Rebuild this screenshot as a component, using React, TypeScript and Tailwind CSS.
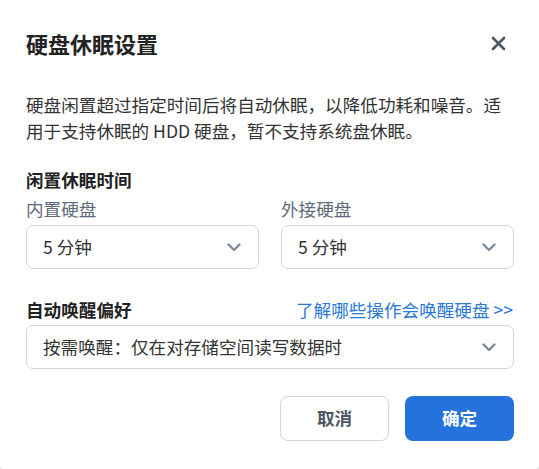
import React, { useState } from 'react';

const font = { fontFamily: '"Noto Sans CJK SC", "Noto Sans", sans-serif' };

function Chevron() {
  return (
    <svg width="14" height="9" viewBox="0 0 14 9" fill="none" className="shrink-0">
      <path d="M1.5 1.5L7 7L12.5 1.5" stroke="#7d8a9c" strokeWidth="2.4" strokeLinecap="round" strokeLinejoin="round" />
    </svg>
  );
}

function SelectBox({ value, className = '' }: { value: string; className?: string }) {
  return (
    <div
      className={`h-[44px] border border-[#cdd6e2] rounded-[7px] bg-white pl-[16px] pr-[17px] flex items-center justify-between ${className}`}
    >
      <span className="text-[17.6px] text-[#333] leading-none">{value}</span>
      <Chevron />
    </div>
  );
}

export default function App() {
  const [internal] = useState('5 分钟');
  const [external] = useState('5 分钟');

  return (
    <div className="w-[539px] h-[469px] bg-[#d9dde3]" style={font}>
      <div className="w-full h-full bg-white rounded-b-[4px] px-[26px] pt-[28px] pr-[25px] flex flex-col">
        {/* Header */}
        <div className="h-[30px] flex items-center justify-between">
          <h1 className="text-[22px] leading-[30px] font-bold text-[#222]">硬盘休眠设置</h1>
          <button className="w-[24px] h-[24px] mr-[4px] flex items-center justify-center">
            <svg width="15" height="15" viewBox="0 0 15 15" fill="none">
              <path d="M2 2L13 13M13 2L2 13" stroke="#4a5567" strokeWidth="2.6" strokeLinecap="round" />
            </svg>
          </button>
        </div>

        {/* Description */}
        <p className="mt-[34px] text-[17.6px] leading-[26px] text-[#333]">
          硬盘闲置超过指定时间后将自动休眠，以降低功耗和噪音。适用于支持休眠的 HDD 硬盘，暂不支持系统盘休眠。
        </p>

        {/* Idle time */}
        <div className="mt-[22px] text-[17.6px] leading-[28px] font-bold text-[#222]">闲置休眠时间</div>
        <div className="mt-[2px] grid grid-cols-2 gap-[22px]">
          <div className="flex flex-col">
            <span className="text-[17.6px] leading-[26px] text-[#5f6b7b]">内置硬盘</span>
            <SelectBox value={internal} className="mt-[3px]" />
          </div>
          <div className="flex flex-col">
            <span className="text-[17.6px] leading-[26px] text-[#5f6b7b]">外接硬盘</span>
            <SelectBox value={external} className="mt-[3px]" />
          </div>
        </div>

        {/* Wake preference */}
        <div className="mt-[28px] flex items-center justify-between leading-[26px]">
          <span className="text-[17.6px] font-bold text-[#222]">自动唤醒偏好</span>
          <a className="text-[17.6px] text-[#2a78d8] mr-[1px]">了解哪些操作会唤醒硬盘 &gt;&gt;</a>
        </div>
        <SelectBox value="按需唤醒：仅在对存储空间读写数据时" className="mt-[2px]" />

        {/* Actions */}
        <div className="mt-[27px] flex justify-end gap-[16px]">
          <button className="w-[109px] h-[45px] rounded-[8px] border border-[#cdd6e2] bg-white text-[17.6px] font-bold text-[#4b5563]">
            取消
          </button>
          <button className="w-[109px] h-[45px] rounded-[8px] bg-[#2473dd] text-[17.6px] font-bold text-white">
            确定
          </button>
        </div>
      </div>
    </div>
  );
}
